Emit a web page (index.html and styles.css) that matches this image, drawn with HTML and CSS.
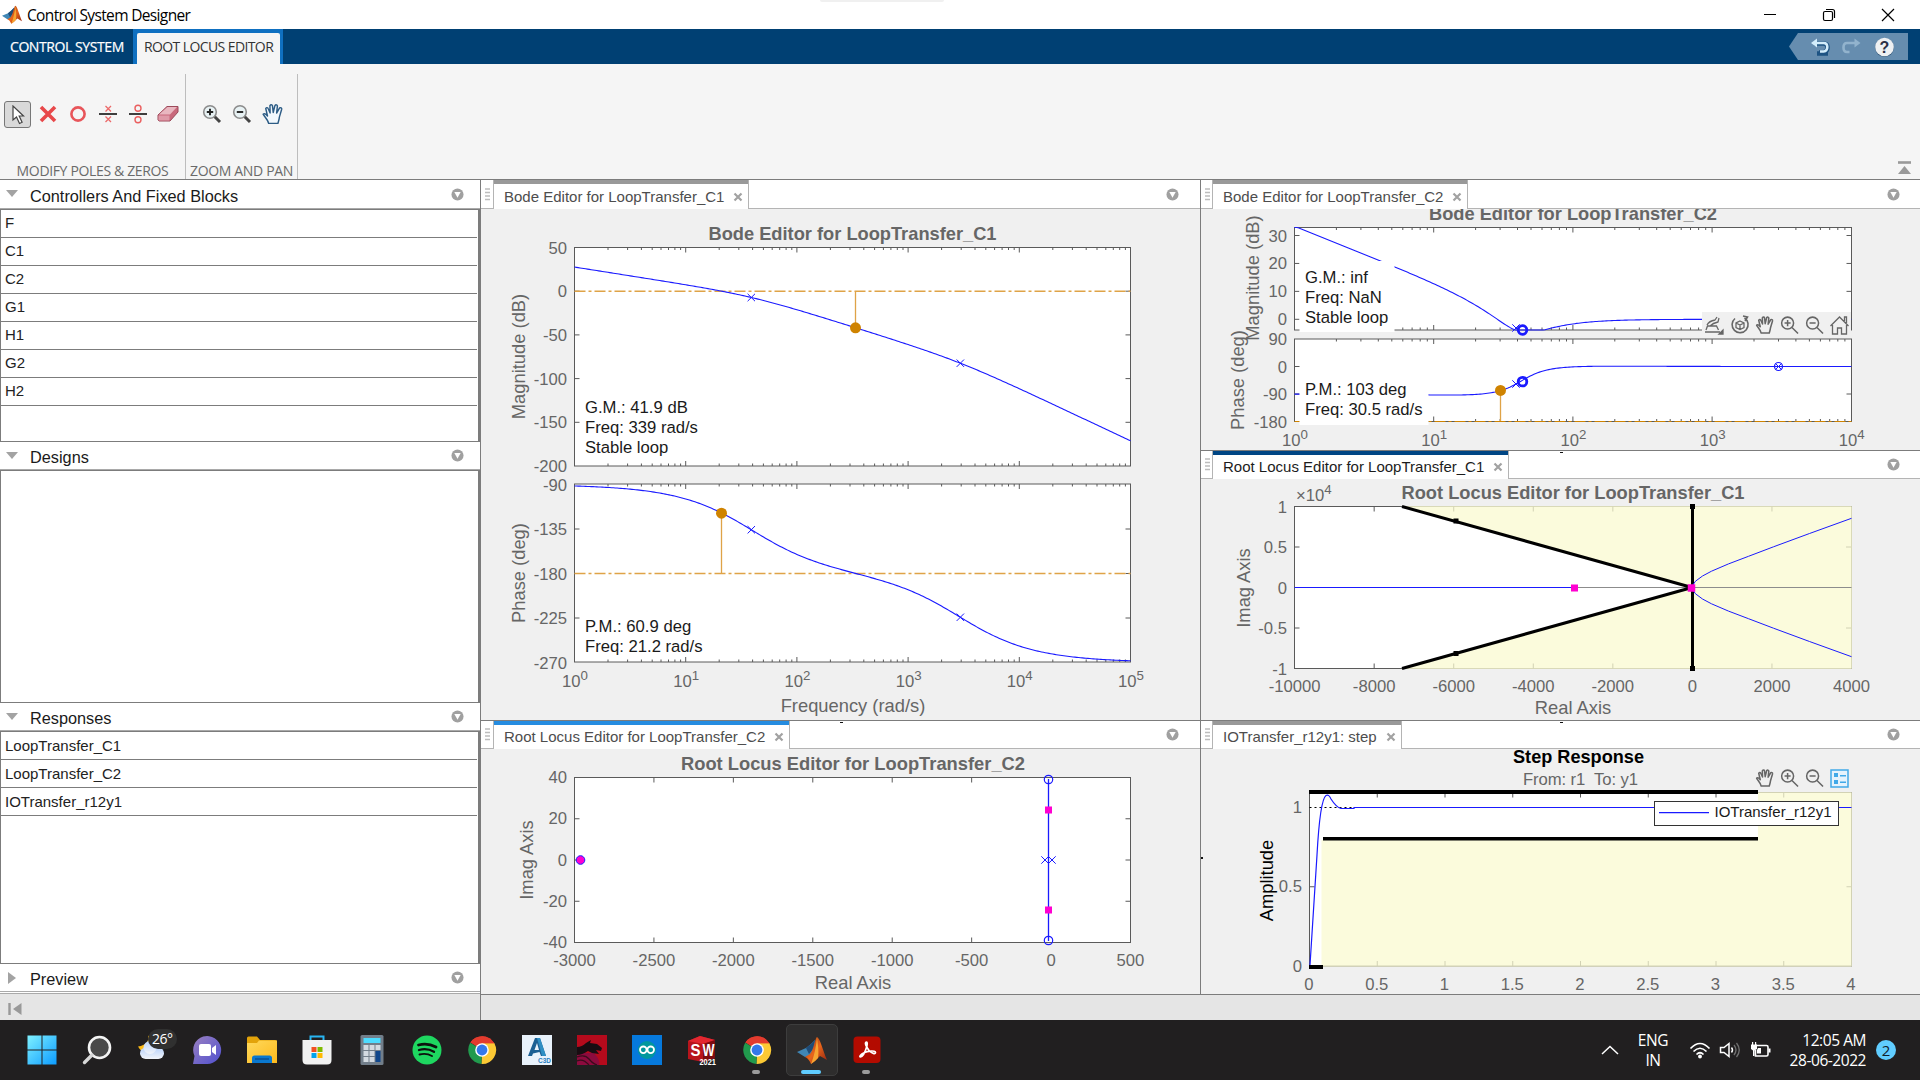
FILE: index.html
```html
<!DOCTYPE html>
<html lang="en">
<head>
<meta charset="utf-8">
<title>Control System Designer</title>
<link rel="stylesheet" href="styles.css">
</head>
<body>
<svg class="defs" width="0" height="0" aria-hidden="true">
  <defs>
    <linearGradient id="gOrange" x1="0" y1="0" x2="1" y2="1"><stop offset="0" stop-color="#8c2a14"/><stop offset=".5" stop-color="#e8661b"/><stop offset="1" stop-color="#8e1f10"/></linearGradient>
    <linearGradient id="gWin" x1="0" y1="0" x2="1" y2="1"><stop offset="0" stop-color="#7ff1ff"/><stop offset="1" stop-color="#0c9bff"/></linearGradient>
    <linearGradient id="gChat" x1="0" y1="0" x2="1" y2="1"><stop offset="0" stop-color="#9a80c0"/><stop offset="1" stop-color="#5050d0"/></linearGradient>
    <linearGradient id="gCloud" x1="0" y1="0" x2="0" y2="1"><stop offset="0" stop-color="#b9d2fa"/><stop offset="1" stop-color="#f2f5fa"/></linearGradient>
    <linearGradient id="gFold" x1="0" y1="0" x2="1" y2="1"><stop offset="0" stop-color="#ffd95c"/><stop offset="1" stop-color="#fdb91c"/></linearGradient>
    <symbol id="matlab" viewBox="0 0 30 28">
      <path d="M0 16 9 12 14 8 18 4 19 10 13 20 8 21Z" fill="#3f86b5"/><path d="M9 12 14 8 18 4 17 12 12 18Z" fill="#1f4c78"/>
      <path d="M8 21 13 18C17 13 18 2 20 1 23 2 26 15 30 24L23 20 18 25 14 28C12 24 11 22 8 21Z" fill="url(#gOrange)"/>
      <path d="M14 28C17 20 19 12 20 1 21 10 22 16 21 22L18 25Z" fill="#f6a532"/>
    </symbol>
    <symbol id="drop" viewBox="0 0 14 14"><circle cx="7" cy="7" r="6.5" fill="#a0a0a0"/><path d="M3.6 4.4h6.8L7 10.4Z" fill="#fff"/></symbol>
    <symbol id="down" viewBox="0 0 12 8"><path d="M0 0h12L6 7Z" fill="#a3a3a3"/></symbol>
    <symbol id="grip" viewBox="0 0 6 13"><path d="M0 1h5M0 4.5h5M0 8h5M0 11.5h5" stroke="#bdbdbd" stroke-width="1.6"/></symbol>
    <symbol id="close" viewBox="0 0 10 10"><path d="M1.5 1.5l7 7M8.5 1.5l-7 7" stroke="#a2a2a2" stroke-width="2.2"/></symbol>
    <symbol id="chrome" viewBox="0 0 30 30">
      <path d="M15 15 3.4 7.6A14 14 0 0 1 27.3 8.2Z" fill="#e33b2e"/><path d="M15 15 27.3 8.2A14 14 0 0 1 14.4 29Z" fill="#fcc934"/><path d="M15 15 14.4 29A14 14 0 0 1 3.2 7.8Z" fill="#219a4d"/>
      <path d="M15 8.2H27.3V12H15Z" fill="#fcc934"/><path d="M3 8 9.5 18.5 14 15Z" fill="#219a4d"/><path d="M3.4 7.6A14 14 0 0 1 27.3 8.2H15Z" fill="#e33b2e"/>
      <circle cx="15" cy="15" r="6.8" fill="#fff"/><circle cx="15" cy="15" r="5.4" fill="#3478ea"/>
    </symbol>
    <symbol id="hand" viewBox="0 0 20 20"><path d="M6 18.5C5.5 15.5 2.6 12.8 1 10.2c1-1 2.4-.5 4 1.6L3.4 5c.6-1.2 1.900-1 2.300.2L7.400 9 7.200 2.400c.7-1.200 2-1 2.300 0L10.200 8.600 11.800 2.200c.8-.9 2-.6 2.200.5L13.300 9.200 16 4.500c1-.6 2.200 0 1.900 1.200L15.800 12.800C15.600 15.500 14.800 16.700 14.500 18.500Z" stroke-linejoin="round"/></symbol>
    <symbol id="zin" viewBox="0 0 20 20"><circle cx="8" cy="8" r="6.3"/><path d="M12.600 12.600 19 19M8 4.800v6.400M4.800 8h6.400"/></symbol>
    <symbol id="zout" viewBox="0 0 20 20"><circle cx="8" cy="8" r="6.3"/><path d="M12.600 12.600 19 19M4.800 8h6.400"/></symbol>
  </defs>
</svg>

<header class="titlebar">
  <svg class="app-icon" width="20" height="19"><use href="#matlab"/></svg>
  <span class="app-title">Control System Designer</span>
  <span class="notch"></span>
  <div class="win-buttons">
    <svg width="14" height="14"><path d="M1 6.500h12" stroke="#000" stroke-width="1"/></svg>
    <svg width="14" height="14" fill="none" stroke="#000" stroke-width="1.200"><rect x="1.500" y="3.500" width="9" height="9" rx="1.500"/><path d="M4 1.500h6.500q2 0 2 2V10"/></svg>
    <svg width="14" height="14"><path d="M1 1l12 12M13 1L1 13" stroke="#000" stroke-width="1.200"/></svg>
  </div>
</header>

<nav class="ribbon">
  <div class="rtab">CONTROL SYSTEM</div>
  <div class="rtab-active"><span>ROOT LOCUS EDITOR</span></div>
  <svg class="quick" width="119" height="27">
    <path d="M0 13.500 9 0H119V27H9Z" fill="#668daf"/>
    <path d="M39 20.500H28M25 10.500H34.500q4 0 4 4t-4 5H30" fill="none" stroke="#1d5383" stroke-width="4.500"/>
    <path d="M25 10H34.500q3.800 0 3.800 4t-3.800 4.500H31" fill="none" stroke="#d3edfb" stroke-width="2.600"/><path d="M22 10 28 5.500v9Z" fill="#d3edfb"/>
    <path d="M67 10H58q-3.500 0-3.500 4.500T58 19h2.500" fill="none" stroke="#92b3cd" stroke-width="2.600"/><path d="M71.500 10 65.500 5.500v9Z" fill="#92b3cd"/>
    <circle cx="95.500" cy="14.500" r="9.500" fill="#35597a"/><circle cx="95.500" cy="14" r="9.300" fill="#eef0f2"/>
    <text x="95.500" y="19.500" text-anchor="middle" class="qmark">?</text>
  </svg>
</nav>

<section class="toolstrip">
  <div class="tgroup modify">
    <div class="tools">
      <span class="tool-sel"><svg width="14" height="20"><path d="M2 1v14l3.500-3 3 6.500 2.600-1.200L8.200 11H12.500Z" fill="#fff" stroke="#444" stroke-width="1.200"/></svg></span>
      <svg width="18" height="18"><path d="M2 2l14 14M16 2L2 16" stroke="#e8484a" stroke-width="3.600"/></svg>
      <svg width="18" height="18"><circle cx="9" cy="9" r="6.600" fill="none" stroke="#e8555a" stroke-width="2.600"/></svg>
      <svg width="18" height="20"><path d="M0 10h18" stroke="#111" stroke-width="1.600"/><path d="M6.500 2l5.500 5.500M12 2L6.500 7.500M6.500 12.500L12 18M12 12.500L6.500 18" stroke="#ec6a6a" stroke-width="1.300"/></svg>
      <svg width="18" height="20"><path d="M0 10h18" stroke="#111" stroke-width="1.600"/><g fill="none" stroke="#ea5f5f" stroke-width="1.400"><circle cx="9" cy="4.200" r="3"/><circle cx="9" cy="15.800" r="3"/></g></svg>
      <svg class="eraser" width="22" height="18"><path d="M1 10 10 1.500H21V7L13 16H2L1 15Z" fill="#c9697c" stroke="#9c4a5a"/><path d="M2 9.500 10.500 2H20L13 9.500Z" fill="#e9b7c0"/><path d="M1.500 10.500H12.500V15.500H1.500Z" fill="#df9aa8"/></svg>
    </div>
    <div class="tlabel">MODIFY POLES &amp; ZEROS</div>
  </div>
  <div class="tgroup zoompan">
    <div class="tools">
      <svg width="20" height="20"><path d="M11.500 11.500 18 18" stroke="#444" stroke-width="3"/><circle cx="8" cy="8" r="6.300" fill="#e8f2f4" stroke="#8c8c8c" stroke-width="1.600"/><path d="M8 4.800v6.400M4.800 8h6.400" stroke="#222" stroke-width="1.900"/></svg>
      <svg width="20" height="20"><path d="M11.500 11.500 18 18" stroke="#444" stroke-width="3"/><circle cx="8" cy="8" r="6.300" fill="#e8f2f4" stroke="#8c8c8c" stroke-width="1.600"/><path d="M4.800 8h6.400" stroke="#222" stroke-width="1.900"/></svg>
      <svg class="pan" width="22" height="22"><use href="#hand"/></svg>
    </div>
    <div class="tlabel">ZOOM AND PAN</div>
  </div>
  <svg class="collapse" width="14" height="14"><path d="M0 1.500h13" stroke="#999" stroke-width="2.600"/><path d="M0 13 6.500 5l6.500 8Z" fill="#999"/></svg>
</section>

<main class="work">
  <aside class="side">
    <div class="phead first"><svg width="12" height="8"><use href="#down"/></svg><span>Controllers And Fixed Blocks</span><svg class="dd" width="13" height="13"><use href="#drop"/></svg></div>
    <ul class="list blocks"><li>F</li><li>C1</li><li>C2</li><li>G1</li><li>H1</li><li>G2</li><li>H2</li></ul>
    <div class="phead"><svg width="12" height="8"><use href="#down"/></svg><span>Designs</span><svg class="dd" width="13" height="13"><use href="#drop"/></svg></div>
    <ul class="list designs"></ul>
    <div class="phead"><svg width="12" height="8"><use href="#down"/></svg><span>Responses</span><svg class="dd" width="13" height="13"><use href="#drop"/></svg></div>
    <ul class="list responses"><li>LoopTransfer_C1</li><li>LoopTransfer_C2</li><li>IOTransfer_r12y1</li></ul>
    <div class="phead"><svg width="12" height="12"><path d="M2 0v12l8-6Z" fill="#a3a3a3"/></svg><span>Preview</span><svg class="dd" width="13" height="13"><use href="#drop"/></svg></div>
    <div class="sidefoot"><svg width="14" height="14"><path d="M1.500 1v12" stroke="#999" stroke-width="2.400"/><path d="M13.500 1v12L5 7Z" fill="#999"/></svg></div>
  </aside>
  <div class="docs">
    <div class="cols">
      <div class="col">
        <section class="pane p-bode1">
          <div class="tabs"><svg class="grip" width="6" height="13"><use href="#grip"/></svg><div class="tab">Bode Editor for LoopTransfer_C1<svg width="10" height="10"><use href="#close"/></svg></div><svg class="dd" width="13" height="13"><use href="#drop"/></svg></div>
          <svg class="plot" id="bode1" viewBox="481 209 719 511"></svg>
        </section>
        <section class="pane p-rl2">
          <div class="tabs"><svg class="grip" width="6" height="13"><use href="#grip"/></svg><div class="tab blue">Root Locus Editor for LoopTransfer_C2<svg width="10" height="10"><use href="#close"/></svg></div><i class="dash"></i><svg class="dd" width="13" height="13"><use href="#drop"/></svg></div>
          <svg class="plot" id="rl2" viewBox="481 749 719 245"></svg>
        </section>
      </div>
      <div class="col right">
        <section class="pane p-bode2">
          <div class="tabs"><svg class="grip" width="6" height="13"><use href="#grip"/></svg><div class="tab">Bode Editor for LoopTransfer_C2<svg width="10" height="10"><use href="#close"/></svg></div><svg class="dd" width="13" height="13"><use href="#drop"/></svg></div>
          <svg class="plot" id="bode2" viewBox="1201 209 719 241"></svg>
        </section>
        <section class="pane p-rl1">
          <div class="tabs"><svg class="grip" width="6" height="13"><use href="#grip"/></svg><div class="tab navy">Root Locus Editor for LoopTransfer_C1<svg width="10" height="10"><use href="#close"/></svg></div><i class="dash"></i><svg class="dd" width="13" height="13"><use href="#drop"/></svg></div>
          <svg class="plot" id="rl1" viewBox="1201 479 719 241"></svg>
        </section>
        <section class="pane p-step">
          <div class="tabs"><svg class="grip" width="6" height="13"><use href="#grip"/></svg><div class="tab">IOTransfer_r12y1: step<svg width="10" height="10"><use href="#close"/></svg></div><i class="dash"></i><svg class="dd" width="13" height="13"><use href="#drop"/></svg></div>
          <svg class="plot" id="step" viewBox="1201 749 719 245"></svg>
        </section>
      </div>
    </div>
    <div class="status"></div>
  </div>
</main>

<footer class="taskbar">
  <div class="apps">
    <div class="app"><svg width="30" height="30" fill="url(#gWin)"><path d="M.5.500H14.500V14.500H.5ZM15.500.500H29.500V14.500H15.500ZM.5 15.500H14.500V29.500H.5ZM15.500 15.500H29.500V29.500H15.500Z"/></svg></div>
    <div class="app"><svg width="30" height="30"><circle cx="17.500" cy="12.500" r="10.500" fill="#4a4a4a" stroke="#f4f4f4" stroke-width="2.600"/><path d="M10 20 2.500 27.500" stroke="#d8d8d8" stroke-width="3.400" stroke-linecap="round"/></svg></div>
    <div class="app"><svg class="weather" width="44" height="36" viewBox="-7 -3.500 44 36"><path d="M11 0q2 9-10 11 5 9 13 6L15 3Z" fill="#fbb916"/><rect x="3" y="12" width="24" height="11.500" rx="5.700" fill="url(#gCloud)"/><circle cx="13" cy="12" r="6.500" fill="url(#gCloud)"/><rect x="11" y="-6.500" width="29" height="20" rx="10" fill="#303030"/><text x="15" y="8" class="temp">26°</text></svg></div>
    <div class="app"><svg width="30" height="30"><path d="M1 29 2.500 21A14 14 0 1 1 15 29Z" fill="url(#gChat)"/><rect x="7" y="9" width="12" height="12" rx="2" fill="#fff"/><path d="M20 13l4-3v10l-4-3Z" fill="#fff"/></svg></div>
    <div class="app"><svg width="30" height="30"><path d="M0 3q0-1.500 1.500-1.500H10L13 5H28q2 0 2 2V14H0Z" fill="#e3a30a"/><path d="M0 8H10L12 5.500H30V28H0Z" fill="url(#gFold)"/><path d="M5 28V23q0-2.500 2.500-2.500H22.500q2.500 0 2.500 2.500V28Z" fill="#0a78cf"/><path d="M8 24h14" stroke="#0b4f93" stroke-width="1.500"/></svg></div>
    <div class="app"><svg width="30" height="30"><path d="M8.500 7V1.500H21.500V7" fill="none" stroke="#28b5f2" stroke-width="2"/><path d="M.5 5H29.500V25q0 4.500-4.500 4.500H5Q.5 29.500.5 25Z" fill="#f1f1f1"/><path d="M9.500 12h5v5h-5Z" fill="#f25022"/><path d="M15.500 12h5v5h-5Z" fill="#7fba00"/><path d="M9.500 18h5v5h-5Z" fill="#00a4ef"/><path d="M15.500 18h5v5h-5Z" fill="#ffb900"/></svg></div>
    <div class="app"><svg width="24" height="30"><rect x=".5" width="23" height="30" rx="1.500" fill="#727e8a"/><rect x="3.500" y="3" width="17" height="5" fill="#4ddcff"/><g fill="#d3dae1"><path d="M3.500 10h5v5h-5ZM9.500 10h5v5h-5ZM15.500 10h5v5h-5ZM3.500 16h5v5h-5ZM9.500 16h5v5h-5ZM3.500 22h5v5h-5ZM9.500 22h5v5h-5Z"/></g><path d="M15.500 16h5v11h-5Z" fill="#11478c"/></svg></div>
    <div class="app"><svg width="30" height="30"><circle cx="15" cy="15" r="14.500" fill="#1ed760"/><g fill="none" stroke="#0c120d" stroke-linecap="round"><path d="M6.500 10q9-2.500 17.500 2" stroke-width="2.800"/><path d="M7 15q8-2.300 15 1.800" stroke-width="2.300"/><path d="M7.500 19.500q7-1.700 12.500 1.500" stroke-width="1.900"/></g></svg></div>
    <div class="app"><svg width="30" height="30"><use href="#chrome"/></svg></div>
    <div class="app"><svg width="30" height="30"><rect width="30" height="30" fill="#e9f2fb"/><path d="M6 21 13 3H18L24 21H19L17.500 17 11 18.500 10 21ZM15 8 12.500 15H17Z" fill="#1b5f93" fill-rule="evenodd"/><path d="M15 3H18L24 21H20Z" fill="#2f8fc4"/><text x="16" y="28" class="c3d">C3D</text></svg></div>
    <div class="app"><svg width="30" height="30"><rect width="30" height="30" fill="#b50a1c"/><path d="M0 18H17Q24 26 22 30H0Z" fill="#8c0b3e"/><path d="M0 12Q5 12 9 8L14 5 13 8 20 9 25 13 24 16 19 15 22 19 15 18 11 16Q5 20 0 20Z" fill="#180d12"/><path d="M0 22Q8 19 12 24T20 30M0 26Q6 23 12 30" fill="none" stroke="#3a0c1c" stroke-width="1.300"/></svg></div>
    <div class="app"><svg width="30" height="30"><rect width="30" height="30" fill="#0679dc"/><circle cx="15" cy="15" r="9" fill="#00979d"/><g fill="none" stroke="#fff" stroke-width="1.800"><circle cx="11.300" cy="14.800" r="3.300"/><circle cx="18.700" cy="14.800" r="3.300"/></g></svg></div>
    <div class="app"><svg width="30" height="30"><path d="M1 6 13 1 28 5V23L16 27 1 24Z" fill="#b8141c"/><path d="M1 6 13 1 28 5 16 9Z" fill="#e32730"/><path d="M16 9 28 5V23L16 27Z" fill="#7d0c10"/><text x="3.500" y="21" class="sw" textLength="10" lengthAdjust="spacingAndGlyphs">S</text><text x="15.500" y="20.500" class="sw" textLength="12" lengthAdjust="spacingAndGlyphs">W</text><text x="12.500" y="29.500" class="yr" textLength="16.500" lengthAdjust="spacingAndGlyphs">2021</text></svg></div>
    <div class="app run"><svg width="30" height="30"><use href="#chrome"/></svg></div>
    <div class="app cur"><svg width="30" height="28"><use href="#matlab"/></svg></div>
    <div class="app run"><svg width="28" height="28"><rect x=".5" y=".500" width="27" height="26.500" rx="4" fill="#b30b00"/><path d="M13.500 6c-2.500.5 0 5 2.500 8.500 3 3 6.500 4 6.500 2 0-2.500-8-1.500-11.500.3C7 18.700 6 21 7.500 21c2.500-.5 5-6 6.300-10.500C14.300 8 14.500 6 13.500 6Z" fill="none" stroke="#fff" stroke-width="1.700"/></svg></div>
  </div>
  <div class="tray">
    <svg width="18" height="10"><path d="M1 9 9 1.500 17 9" fill="none" stroke="#fff" stroke-width="1.500"/></svg>
    <div class="lang">ENG<br>IN</div>
    <svg class="wifi" width="22" height="18"><g fill="none" stroke="#fff" stroke-width="1.700"><path d="M1.500 7.500Q11-2.500 20.500 7.500M4.500 10.500Q11 4 17.500 10.500M7.500 13.500Q11 10 14.500 13.500"/></g><circle cx="11" cy="15.500" r="1.900" fill="#fff"/></svg>
    <svg class="vol" width="22" height="18"><path d="M1.500 6.500h3.500L10 2.500v13L5 11.500H1.500Z" fill="none" stroke="#fff" stroke-width="1.500"/><path d="M12.500 6.500q2 2.500 0 5" fill="none" stroke="#fff" stroke-width="1.400"/><path d="M15 4q4 5 0 10M17.500 2q5.500 7 0 14" fill="none" stroke="#707070" stroke-width="1.300"/></svg>
    <svg class="bat" width="22" height="18"><path d="M6 4.500H16.500q1.500 0 1.500 1.500V13.500q0 1.500-1.500 1.500H5.500V9" fill="none" stroke="#fff" stroke-width="1.600"/><path d="M18.500 7.500h2v4h-2ZM8 7h3v5.500H7V9ZM1 3.500h6V8L4.500 9.500V15H3V9.500L1 8ZM2 1h1.200v3H2ZM5 1h1.200v3H5Z" fill="#fff"/></svg>
    <div class="clock">12:05 AM<br>28-06-2022</div>
    <div class="badge">2</div>
  </div>
</footer>
<script src="charts.js"></script>
</body>
</html>
```
FILE: styles.css
```css
* { box-sizing: border-box; }
body { margin: 0; width: 1920px; height: 1080px; overflow: hidden; background: #f0f0f0; font-family: "Liberation Sans", Arial, sans-serif; color: #1a1a1a; display: flex; flex-direction: column; }
svg { display: block; flex: none; }
.defs { position: absolute; }

/* window title */
.titlebar { height: 29px; flex: none; background: #fff; display: flex; align-items: center; padding-left: 2px; position: relative; }
.app-icon { margin-right: 5px; }
.app-title { font: 15.5px "Open Sans", "Noto Sans", sans-serif; letter-spacing: -.65px; color: #000; }
.notch { position: absolute; left: 820px; top: 0; width: 124px; height: 2px; background: #f0f0f0; border-radius: 0 0 4px 4px; }
.win-buttons { margin-left: auto; display: flex; gap: 45px; padding-right: 25px; }

/* ribbon tabs */
.ribbon { height: 35px; flex: none; background: #004073; display: flex; font: 14px/35px "Open Sans", "Noto Sans", sans-serif; }
.rtab { width: 133px; padding-left: 10px; color: #fff; letter-spacing: -.42px; white-space: nowrap; -webkit-text-stroke: .2px #fff; }
.rtab-active { width: 150px; background: #0f70c1; padding: 4px 3px 0 4px; color: #333; letter-spacing: -.6px; white-space: nowrap; }
.rtab-active span { display: block; height: 31px; line-height: 28px; padding-left: 7px; background: #f5f5f5; border-radius: 2px 2px 0 0; }
.quick { margin: 4px 12px 0 auto; }
.qmark { font: bold 16px "Liberation Sans", sans-serif; fill: #2b2f45; }

/* toolstrip */
.toolstrip { height: 116px; flex: none; background: #f5f5f5; border-bottom: 1px solid #7c7c7c; display: flex; padding-top: 10px; }
.tgroup { border-right: 1px solid #bdbdbd; display: flex; flex-direction: column; justify-content: space-between; }
.modify { width: 186px; }
.zoompan { width: 112px; }
.tools { display: flex; align-items: center; height: 27px; margin-top: 27px; }
.tools > svg { margin-top: -1px; }
.modify .tools { padding-left: 4px; gap: 12px; }
.modify .tool-sel { margin-right: -4px; }
.eraser { margin-left: -2px; }
.zoompan .tools { padding-left: 16px; gap: 10px; }
.tool-sel { width: 27px; height: 27px; border: 1px solid #777; border-radius: 3px; background: #d9d9d9; display: grid; place-items: center; }
.pan { fill: #f2f8fd; stroke: #2d5c85; stroke-width: 1.3; }
.tlabel { text-align: center; font: 14px/16px "Open Sans", "Noto Sans", sans-serif; letter-spacing: -.35px; color: #6a6a6a; white-space: nowrap; }
.collapse { margin: 87px 8px 0 auto; }

/* work area */
.work { height: 840px; flex: none; display: flex; }
.side { width: 481px; flex: none; border-right: 1px solid #7c7c7c; background: #fff; display: flex; flex-direction: column; }
.phead { height: 28px; flex: none; display: flex; align-items: center; padding: 0 16px 0 6px; font-size: 16.3px; border-bottom: 1px solid #a9a9a9; }
.phead.first { height: 29px; }
.phead span { margin-left: 12px; padding-top: 4px; }
.phead .dd { margin-left: auto; }
.list { margin: 0; padding: 0; list-style: none; border: 1px solid #7c7c7c; border-right-width: 2px; flex: none; font-size: 15px; color: #222; }
.list li { height: 28px; line-height: 26px; padding-left: 4px; border-bottom: 1px solid #7c7c7c; margin-right: 1px; }
.responses li { line-height: 27px; }
.blocks, .designs, .responses { height: 233px; }
.sidefoot { flex: 1; background: #e5e5e5; border-top: 1px solid #a9a9a9; margin-top: 1px; padding: 8px 0 0 8px; }

.docs { flex: 1; display: flex; flex-direction: column; }
.cols { height: 815px; flex: none; display: flex; border-bottom: 1px solid #7c7c7c; }
.status { flex: 1; background: #e5e5e5; }
.col { width: 720px; display: flex; flex-direction: column; border-right: 1px solid #7c7c7c; }
.col.right { width: 719px; border-right: 0; }
.pane { background: #f0f0f0; display: flex; flex-direction: column; flex: none; }
.pane + .pane { border-top: 1px solid #7c7c7c; }
.p-bode1 { height: 540px; }
.p-rl2, .p-step { height: 274px; }
.p-bode2, .p-rl1 { height: 270px; }
.tabs { height: 29px; flex: none; background: #fff; border-bottom: 1px solid #b4b4b4; display: flex; align-items: center; padding: 0 21px 0 4px; position: relative; }
.pane + .pane .tabs { height: 28px; }
.tab { height: 29px; align-self: flex-start; margin-left: 2px; padding: 4px 5px 0 10px; display: flex; align-items: center; gap: 9px; font-size: 15px; color: #4d4d4d; border: solid #b4b4b4; border-width: 0 1px; box-shadow: inset 0 4px #999; background: #fff; white-space: nowrap; }
.pane + .pane .tab { height: 28px; padding-top: 3px; }
.tab.blue { box-shadow: inset 0 4px #258ce0; }
.tab.navy { box-shadow: inset 0 4px #004684; color: #1c1c1c; }
.right .tab { margin-left: 1px; }
.tabs .dd { margin-left: auto; }
.right .tabs .dd { margin-right: -1px; }
.dash { position: absolute; left: 359px; top: 1px; width: 3px; height: 1px; background: #111; }
.plot { width: 719px; flex: 1; font-size: 16.67px; fill: #666; }
.plot .title { font-weight: bold; font-size: 18.33px; }
.plot .lab { font-size: 18.33px; }
.plot .sup { font-size: 13.3px; }
.plot .note { fill: #1a1a1a; }
.plot .ink { fill: #000; }

/* taskbar */
.taskbar { height: 60px; flex: none; background: #211f20; display: flex; justify-content: space-between; color: #fff; font: 15.5px/20px "Open Sans", "Noto Sans", sans-serif; }
.apps { display: flex; padding-left: 14px; }
.app { width: 55px; height: 60px; display: grid; place-items: center; position: relative; }
.app svg { grid-area: 1 / 1; }
.weather { overflow: visible; }
.run::after, .cur::after { content: ""; position: absolute; bottom: 6px; left: 23px; width: 8px; height: 4px; border-radius: 2px; background: #9b9b9b; }
.cur::after { left: 17px; width: 20px; background: #60cdff; }
.cur::before { content: ""; grid-area: 1 / 1; width: 50px; height: 50px; border: 1px solid #3d3d3d; border-radius: 5px; background: #2e2d2d; }
.cur svg { z-index: 1; }
.temp { font-size: 14px; letter-spacing: -.5px; fill: #fff; }
.c3d { font: bold 6.5px "Liberation Sans", sans-serif; fill: #2a7fc0; }
.sw { font: bold 17px "Liberation Sans", sans-serif; fill: #fff; }
.yr { font: bold 8.5px "Liberation Sans", sans-serif; fill: #fff; }
.tray { display: flex; align-items: center; padding-right: 24px; }
.lang { width: 50px; margin-left: 9px; text-align: center; letter-spacing: -.4px; }
.wifi { margin-left: 11px; }
.vol { margin-left: 8px; }
.bat { margin-left: 9px; }
.clock { width: 94px; text-align: right; letter-spacing: -.45px; white-space: nowrap; }
.badge { width: 20px; height: 20px; margin-left: 10px; border-radius: 50%; background: #60cdff; color: #10202a; text-align: center; line-height: 20px; font-size: 15px; }
```
FILE: charts.js
```js
const AX = '#5a5a5a', BLUE = '#1a1aff', OCHRE = '#cf8300', BAND = '#fbfbdc';

const line = (x1, y1, x2, y2, c = AX, w = 1, extra = '') =>
  `<line x1="${x1}" y1="${y1}" x2="${x2}" y2="${y2}" stroke="${c}" stroke-width="${w}" ${extra}/>`;
const rect = (x, y, w, h, fill, extra = '') =>
  `<rect x="${x}" y="${y}" width="${w}" height="${h}" fill="${fill}" ${extra}/>`;
const text = (x, y, s, anchor = 'middle', cls = '', extra = '') =>
  `<text x="${x}" y="${y}" text-anchor="${anchor}" class="${cls}" ${extra}>${s}</text>`;
const title = (x, y, s, len) =>
  text(x, y, s, 'middle', 'title', `textLength="${len}" lengthAdjust="spacingAndGlyphs"`);
const vlabel = (x, y, s, cls = 'lab') =>
  text(x, y, s, 'middle', cls, `transform="rotate(-90 ${x} ${y})"`);
const power = (x, y, n) => text(x, y, `10<tspan class="sup" dy="-7">${n}</tspan>`);
const poly = (pts, c = BLUE, w = 1.1, extra = '') =>
  `<polyline points="${pts.map(p => p[0].toFixed(2) + ',' + p[1].toFixed(2)).join(' ')}" fill="none" stroke="${c}" stroke-width="${w}" ${extra}/>`;
const cross = (x, y, r = 3.7) =>
  line(x - r, y - r, x + r, y + r, BLUE) + line(x - r, y + r, x + r, y - r, BLUE);
const ring = (x, y, r = 4.2, w = 1.2) =>
  `<circle cx="${x}" cy="${y}" r="${r}" fill="none" stroke="${BLUE}" stroke-width="${w}"/>`;
const dot = (x, y, r = 5.5, c = OCHRE) => `<circle cx="${x}" cy="${y}" r="${r}" fill="${c}"/>`;
const square = (x, y, s = 7, c = '#ff00d0') => rect(x - s / 2, y - s / 2, s, s, c);

function frame(x0, y0, x1, y1, fill = '#fff') {
  return rect(x0, y0, x1 - x0, y1 - y0, fill, `stroke="${AX}"`);
}
function logTicks(x0, y0, y1, dec, n) {
  let s = '';
  for (let d = 0; d < n; d++) for (let k = 1; k < 10; k++) {
    const x = (x0 + dec * (d + Math.log10(k))).toFixed(1), h = k === 1 ? 5 : 2.5;
    s += line(x, y0, x, y0 + h) + line(x, y1 - h, x, y1);
  }
  return s;
}
function sideTicks(x0, x1, ys) {
  return ys.map(y => line(x0, y, x0 + 5, y) + line(x1 - 5, y, x1, y)).join('');
}
function endTicks(y0, y1, xs) {
  return xs.map(x => line(x, y0, x, y0 + 5) + line(x, y1 - 5, x, y1)).join('');
}
function sweep(x0, dec, n, f) {
  const pts = [];
  for (let i = 0; i <= 300; i++) {
    const e = n * i / 300;
    pts.push([x0 + dec * e, f(10 ** e)]);
  }
  return pts;
}
const db = v => 20 * Math.log10(v), deg = r => r * 180 / Math.PI;
const put = (id, s) => { document.getElementById(id).innerHTML = s; };

/* small axes-toolbar icons */
const icon = (name, x, y) =>
  `<svg x="${x - 9.5}" y="${y - 9.5}" width="19" height="19" fill="none" stroke="#666" stroke-width="1.6"><use href="#${name}"/></svg>`;

/* Bode plot, C1 */
{
  const x0 = 574.5, x1 = 1130.5, dec = 111.2, p1 = 38.9, p2 = 2950, K = 24;
  const my = v => 247.5 + (50 - v) * 0.874, py = v => 484.5 + (-90 - v) * 178 / 180;
  const mag = w => my(db(K / (w * Math.hypot(1, w / p1) * Math.hypot(1, w / p2))));
  const ph = w => py(-90 - deg(Math.atan(w / p1)) - deg(Math.atan(w / p2)));
  const X = w => x0 + dec * Math.log10(w);
  let s = title(852.5, 239.5, 'Bode Editor for LoopTransfer_C1', 288);
  s += frame(x0, 247.5, x1, 466) + frame(x0, 484, x1, 662);
  s += logTicks(x0, 247.5, 466, dec, 5) + logTicks(x0, 484, 662, dec, 5);
  [50, 0, -50, -100, -150, -200].forEach(v => s += text(567, my(v) + 6, v, 'end'));
  [-90, -135, -180, -225, -270].forEach(v => s += text(567, py(v) + 6, v, 'end'));
  s += sideTicks(x0, x1, [0, -50, -100, -150].map(my)) + sideTicks(x0, x1, [-135, -180, -225].map(py));
  const dash = 'stroke-dasharray="11 3 3 3"';
  s += line(x0, my(0), x1, my(0), '#dfa347', 1.5, dash) + line(x0, py(-180), x1, py(-180), '#dfa347', 1.5, dash);
  s += line(855.5, my(0), 855.5, mag(339), '#dfa347', 1.3) + line(721.5, ph(21.2), 721.5, py(-180), '#dfa347', 1.3);
  s += poly(sweep(x0, dec, 5, mag)) + poly(sweep(x0, dec, 5, ph));
  [p1, p2].forEach(w => s += cross(X(w), mag(w)) + cross(X(w), ph(w)));
  s += dot(855.5, mag(339)) + dot(721.5, ph(21.2));
  s += text(585, 413, 'G.M.: 41.9 dB', 'start', 'note') + text(585, 433, 'Freq: 339 rad/s', 'start', 'note') + text(585, 453, 'Stable loop', 'start', 'note');
  s += text(585, 632, 'P.M.: 60.9 deg', 'start', 'note') + text(585, 652, 'Freq: 21.2 rad/s', 'start', 'note');
  for (let i = 0; i < 6; i++) s += power(x0 + dec * i + .5, 687, i);
  s += text(853, 712, 'Frequency (rad/s)', 'middle', 'lab') + vlabel(525, 356.5, 'Magnitude (dB)') + vlabel(525, 573, 'Phase (deg)');
  put('bode1', s);
}

/* Root locus, C2 */
{
  const x0 = 574.5, x1 = 1130.5, y0 = 777.5, y1 = 942.5, X = v => x0 + (v + 3000) * 556 / 3500, Y = v => 860 - v * 82.5 / 40;
  let s = title(853, 770, 'Root Locus Editor for LoopTransfer_C2', 344) + frame(x0, y0, x1, y1);
  s += sideTicks(x0, x1, [20, 0, -20].map(Y));
  const xs = [-3000, -2500, -2000, -1500, -1000, -500, 0, 500];
  s += endTicks(y0, y1, xs.slice(1, 6).map(X));
  xs.forEach(v => s += text(X(v), 966, v));
  [40, 20, 0, -20, -40].forEach(v => s += text(567, Y(v) + 5.5, v, 'end'));
  s += line(1048.5, 779, 1048.5, 941, BLUE, 1.3) + ring(1048.5, 779.5) + ring(1048.5, 940.5);
  s += cross(1045, 860) + cross(1052, 860) + square(1048.5, 810) + square(1048.5, 910);
  s += dot(580.5, 860, 4.2, '#ff00d0') + ring(580.5, 860, 4.3, 1);
  s += text(853, 988.5, 'Real Axis', 'middle', 'lab') + vlabel(533, 860, 'Imag Axis');
  put('rl2', s);
}

/* Bode plot, C2 */
{
  const x0 = 1294.5, x1 = 1851.5, dec = 139.2;
  const my = v => 319.3 - v * 2.793, py = v => 366.5 - v * 27.5 / 90;
  const mag = w => Math.min(330, my(db(Math.hypot(1810 - w * w, 34 * w) / (w * Math.hypot(w, 39)))));
  const ph = w => py(deg(Math.atan2(34 * w, 1810 - w * w)) - 90 - deg(Math.atan(w / 39)));
  let s = title(1573, 220, 'Bode Editor for LoopTransfer_C2', 288);
  s += frame(x0, 227.5, x1, 330) + frame(x0, 339, x1, 421.5);
  s += logTicks(x0, 227.5, 330, dec, 4) + logTicks(x0, 339, 421.5, dec, 4);
  [30, 20, 10, 0].forEach(v => s += text(1287, my(v) + 6, v, 'end'));
  [90, 0, -90, -180].forEach(v => s += text(1287, py(v) + 6, v, 'end'));
  s += sideTicks(x0, x1, [30, 20, 10, 0].map(my)) + sideTicks(x0, x1, [0, -90].map(py));
  s += line(x0, 421.5, x1, 421.5, OCHRE, 1.2, 'stroke-dasharray="11 3 3 3"');
  s += line(1500.5, ph(30.5), 1500.5, 421, '#dfa347', 1.3);
  s += poly(sweep(x0, dec, 4, w => Math.max(227.5, mag(w)))) + poly(sweep(x0, dec, 4, ph));
  s += cross(1516, mag(39) - 2) + ring(1522.5, 330, 4.3, 2.8) + cross(1516, ph(39)) + ring(1522.5, ph(43) + 1, 4.3, 2.8);
  s += dot(1500.5, ph(30.5)) + ring(1778.5, 366.5, 4) + cross(1778.5, 366.5, 3);
  s += rect(1299.5, 261, 95, 71, '#fff') + rect(1299.5, 379, 129, 46, '#fff');
  s += text(1305, 283, 'G.M.: inf', 'start', 'note') + text(1305, 303, 'Freq: NaN', 'start', 'note') + text(1305, 323, 'Stable loop', 'start', 'note');
  s += text(1305, 395, 'P.M.: 103 deg', 'start', 'note') + text(1305, 415, 'Freq: 30.5 rad/s', 'start', 'note');
  s += rect(1702, 312, 149, 25, '#f0f0f0');
  s += '<g fill="none" stroke="#666" stroke-width="1.300"><path d="M1705 332h15M1706 330l1.500-4h9l2 4M1707 325q2-4 8-5l2-3M1710 326q3-3 8-4l1-4"/><path d="M1723 334v-4l-4 4Z" fill="#666"/><path d="M1735 318.500a8 8 0 1 0 9.500-.5M1743 316l4.500 1-2.500 4" stroke-width="1.600"/><path d="M1740 321l4 2v4.500l-4 2-4-2V323ZM1736 323l4 2 4-2M1740 325v4.500"/><path d="M1830.500 326 1839.500 317l9 9M1832.500 325v9H1837.500v-6H1841.500v6H1846.500v-9M1844.500 321v-4h2v6"/></g>';
  s += icon('hand', 1765, 325) + icon('zin', 1789.5, 325) + icon('zout', 1814.5, 325);
  for (let i = 0; i < 5; i++) s += power(x0 + dec * i + .5, 446, i);
  s += vlabel(1259, 278, 'Magnitude (dB)') + vlabel(1244, 380, 'Phase (deg)');
  put('bode2', s);
}

/* Root locus, C1 */
{
  const x0 = 1294.5, x1 = 1851.5, y0 = 506.5, y1 = 668.5, X = v => 1692.4 + v * 0.03978, Y = v => 587.5 - v * 81;
  let s = title(1573, 499, 'Root Locus Editor for LoopTransfer_C1', 343) + frame(x0, y0, x1, y1);
  const xs = [-10000, -8000, -6000, -4000, -2000, 0, 2000, 4000];
  s += sideTicks(x0, x1, [Y(.5), Y(-.5)]) + endTicks(y0, y1, xs.slice(1, 7).map(X));
  s += `<path d="M1402 506.500H1851.500V668.500H1402L1692 587.500Z" fill="${BAND}" stroke="#d9d9b8"/>`;
  xs.slice(2, 7).forEach(v => s += line(X(v), y0, X(v), y0 + 5, '#d2d2b4') + line(X(v), y1 - 5, X(v), y1, '#d2d2b4'));
  s += line(1846, Y(.5), 1851, Y(.5), '#d2d2b4') + line(1846, Y(-.5), 1851, Y(-.5), '#d2d2b4');
  s += line(x0, 587.5, 1573, 587.5, BLUE, 1) + line(1575, 587.5, x1, 587.5, '#8c8c8c', 1);
  s += line(1402, 506.5, 1692, 587.5, '#000', 3) + line(1402, 668.5, 1692, 587.5, '#000', 3);
  s += square(1456, 521, 5, '#000') + square(1456, 653.5, 5, '#000');
  s += line(1692.5, 506, 1692.5, 669, '#000', 3) + square(1692.5, 506.5, 5, '#000') + square(1692.5, 668.5, 5, '#000');
  const arc = [[0, 2], [3, 6.3], [10, 11.5], [19, 16.3], [36, 23.6], [56, 31.2], [81, 40.7], [117, 54], [159, 69.2]];
  s += poly(arc.map(([a, b]) => [1692.5 + a, 587.5 - b]), BLUE, 1) + poly(arc.map(([a, b]) => [1692.5 + a, 587.5 + b]), BLUE, 1);
  s += square(1574.5, 588) + square(1691.5, 588, 7.5);
  xs.forEach(v => s += text(X(v), 692, v));
  [1, .5, 0, -.5, -1].forEach(v => s += text(1287, Y(v) + 6, v, 'end'));
  s += text(1296, 501, '×10<tspan class="sup" dy="-7">4</tspan>', 'start');
  s += text(1573, 713.5, 'Real Axis', 'middle', 'lab') + vlabel(1250, 588, 'Imag Axis');
  put('rl1', s);
}

/* Step response */
{
  const x0 = 1309.5, x1 = 1851.5, y0 = 792.5, y1 = 966, X = v => x0 + v * 135.5, Y = v => 966 - v * 158.5;
  let s = text(1578.5, 763, 'Step Response', 'middle', 'title ink', 'textLength="131" lengthAdjust="spacingAndGlyphs"');
  s += text(1580.5, 785, 'From: r1&#160; To: y1', 'middle', '', 'textLength="115"') + frame(x0, y0, x1, y1);
  s += `<path d="M1321.500 840H1758V792.500H1851.500V966.500H1321.500Z" fill="${BAND}"/>`;
  s += line(1758, y0, x1, y0, '#d2d2b4') + line(x1, y0, x1, y1, '#d2d2b4') + line(1323, y1, x1, y1, '#d2d2b4');
  for (let i = 1; i < 8; i++) s += line(X(i / 2), y1 - 5, X(i / 2), y1, '#d2d2b4') + line(X(i / 2), y0, X(i / 2), y0 + 5, i < 7 ? AX : '#d2d2b4');
  s += line(x0, Y(.5), x0 + 5, Y(.5)) + line(x1 - 5, Y(.5), x1, Y(.5), '#d2d2b4');
  s += line(x0, 807.5, 1355, 807.5, '#000', 1.2, 'stroke-dasharray="2 3"');
  s += `<path d="M1310 965 1317 855Q1320 800 1326 795.500 1329 794 1331 799 1336 807 1341 808.500H1354V807.500H1851.500" fill="none" stroke="${BLUE}" stroke-width="1.200"/>`;
  s += rect(1309, 790, 449, 4, '#000') + rect(1323, 837, 435, 3.5, '#000') + rect(1309, 965, 14, 4, '#000');
  s += rect(1654.5, 801.5, 184, 24, '#fff', 'stroke="#333"') + line(1659, 812.7, 1709, 812.7, BLUE, 1.2);
  s += text(1714.5, 816.5, 'IOTransfer_r12y1', 'start', 'note', 'font-size="15"');
  for (let i = 0; i <= 8; i++) s += text(X(i / 2) - .5, 989.5, i / 2);
  [1, .5, 0].forEach(v => s += text(1302, Y(v) + 5.5, v, 'end'));
  s += vlabel(1273, 880.5, 'Amplitude', 'lab ink');
  s += icon('hand', 1765, 778) + icon('zin', 1789.5, 778) + icon('zout', 1814.5, 778);
  s += '<g fill="#e6f3fc" stroke="#41a9e8" stroke-width="1.500"><rect x="1831" y="770" width="17" height="17"/></g><path d="M1834 773h4v4h-4ZM1834 780h4v4h-4ZM1840 775h6v1.500h-6ZM1840 781.500h6v1.500h-6Z" fill="#41a9e8"/>';
  s += rect(1201, 857, 2, 2, '#111');
  put('step', s);
}
```
